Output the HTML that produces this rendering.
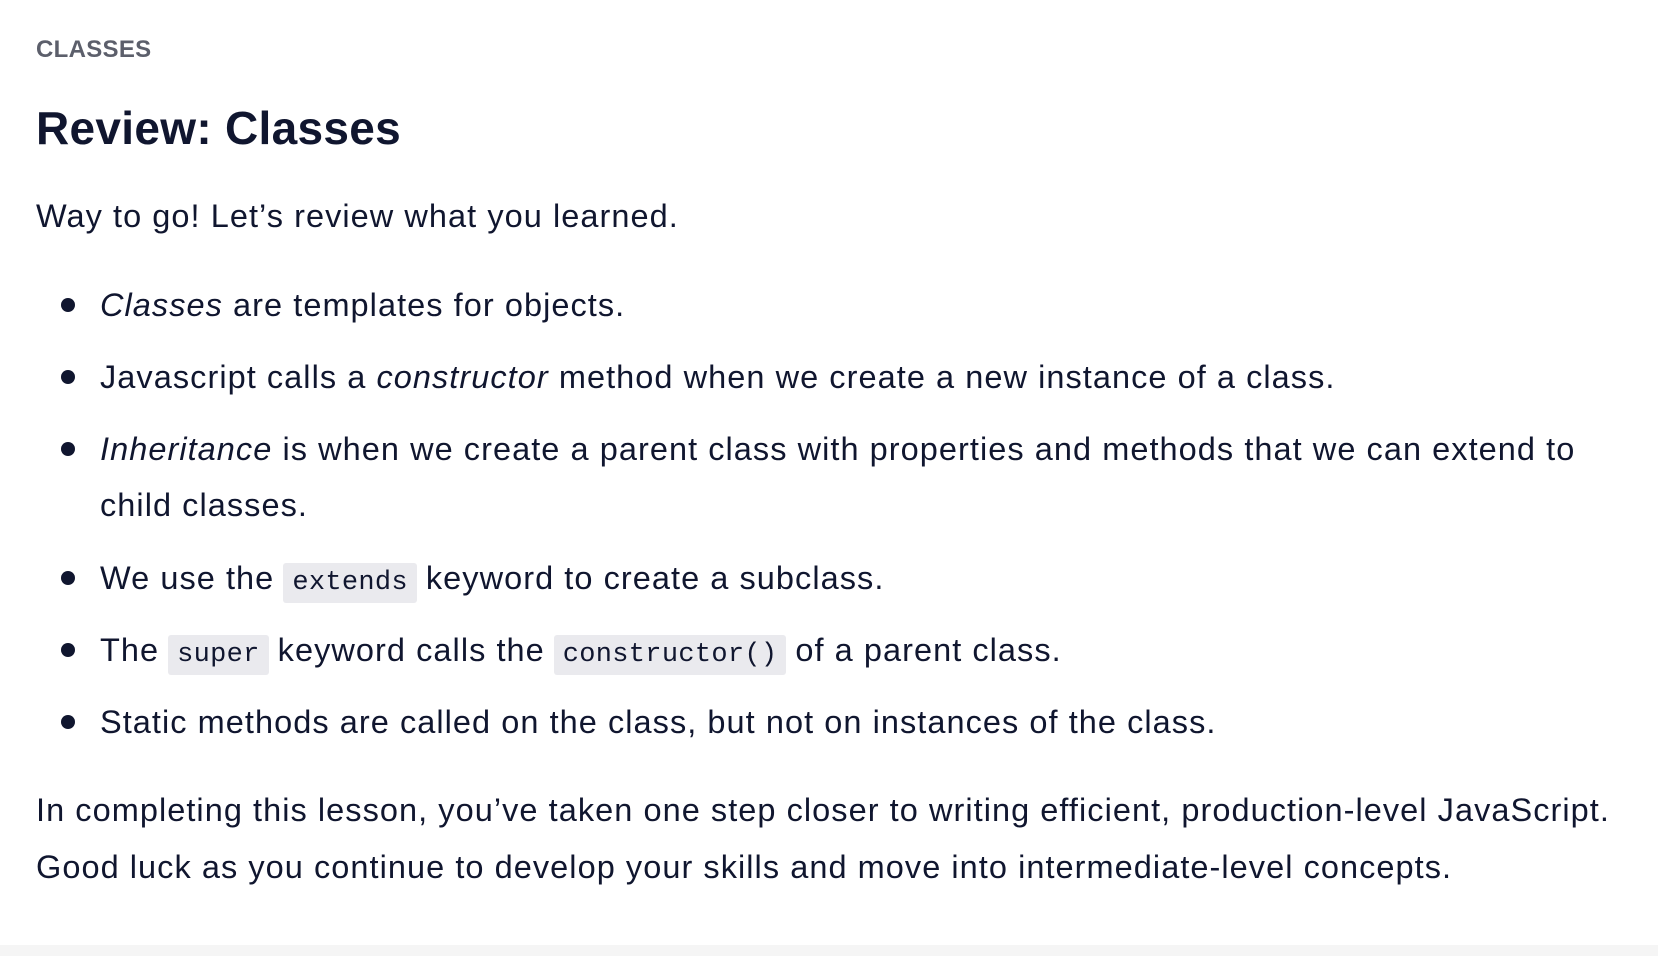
<!DOCTYPE html>
<html><head><meta charset="utf-8"><style>
html,body{margin:0;padding:0;background:#fff;width:1658px;height:956px;overflow:hidden;}
body{font-family:"Liberation Sans",sans-serif;color:#10162f;position:relative;}
.a{position:absolute;white-space:nowrap;}
.t{font-size:32.5px;line-height:40px;letter-spacing:1.05px;}
.dot{position:absolute;left:61px;width:14px;height:14px;border-radius:50%;background:#10162f;}
code{font-family:"Liberation Mono",monospace;font-size:27px;letter-spacing:0.3px;background:#eaeaee;border-radius:3px;padding:5px 9px;margin:0 9px;}
</style></head><body>
<div class="a" style="left:36px;top:36px;font-size:24px;font-weight:bold;color:#5c5f6b;letter-spacing:0.3px;">CLASSES</div>
<div class="a" style="left:36px;top:98px;font-size:46px;font-weight:bold;line-height:60px;letter-spacing:0.3px;">Review: Classes</div>
<div class="a t" style="left:36px;top:196px;">Way to go! Let’s review what you learned.</div>

<div class="dot" style="top:298px"></div>
<div class="a t" style="left:100px;top:285px;"><i>Classes</i> are templates for objects.</div>
<div class="dot" style="top:370px"></div>
<div class="a t" style="left:100px;top:357px;">Javascript calls a <i>constructor</i> method when we create a new instance of a class.</div>
<div class="dot" style="top:442px"></div>
<div class="a t" style="left:100px;top:429px;"><i>Inheritance</i> is when we create a parent class with properties and methods that we can extend to</div>
<div class="a t" style="left:100px;top:485px;">child classes.</div>
<div class="dot" style="top:571px"></div>
<div class="a t" style="left:100px;top:558px;">We use the<code>extends</code>keyword to create a subclass.</div>
<div class="dot" style="top:643px"></div>
<div class="a t" style="left:100px;top:630px;">The<code>super</code>keyword calls the<code>constructor()</code>of a parent class.</div>
<div class="dot" style="top:715px"></div>
<div class="a t" style="left:100px;top:702px;">Static methods are called on the class, but not on instances of the class.</div>

<div class="a t" style="left:36px;top:790px;">In completing this lesson, you’ve taken one step closer to writing efficient, production-level JavaScript.</div>
<div class="a t" style="left:36px;top:847px;">Good luck as you continue to develop your skills and move into intermediate-level concepts.</div>
<div style="position:absolute;left:0;top:945px;width:1658px;height:11px;background:#f5f5f5;"></div>
</body></html>
